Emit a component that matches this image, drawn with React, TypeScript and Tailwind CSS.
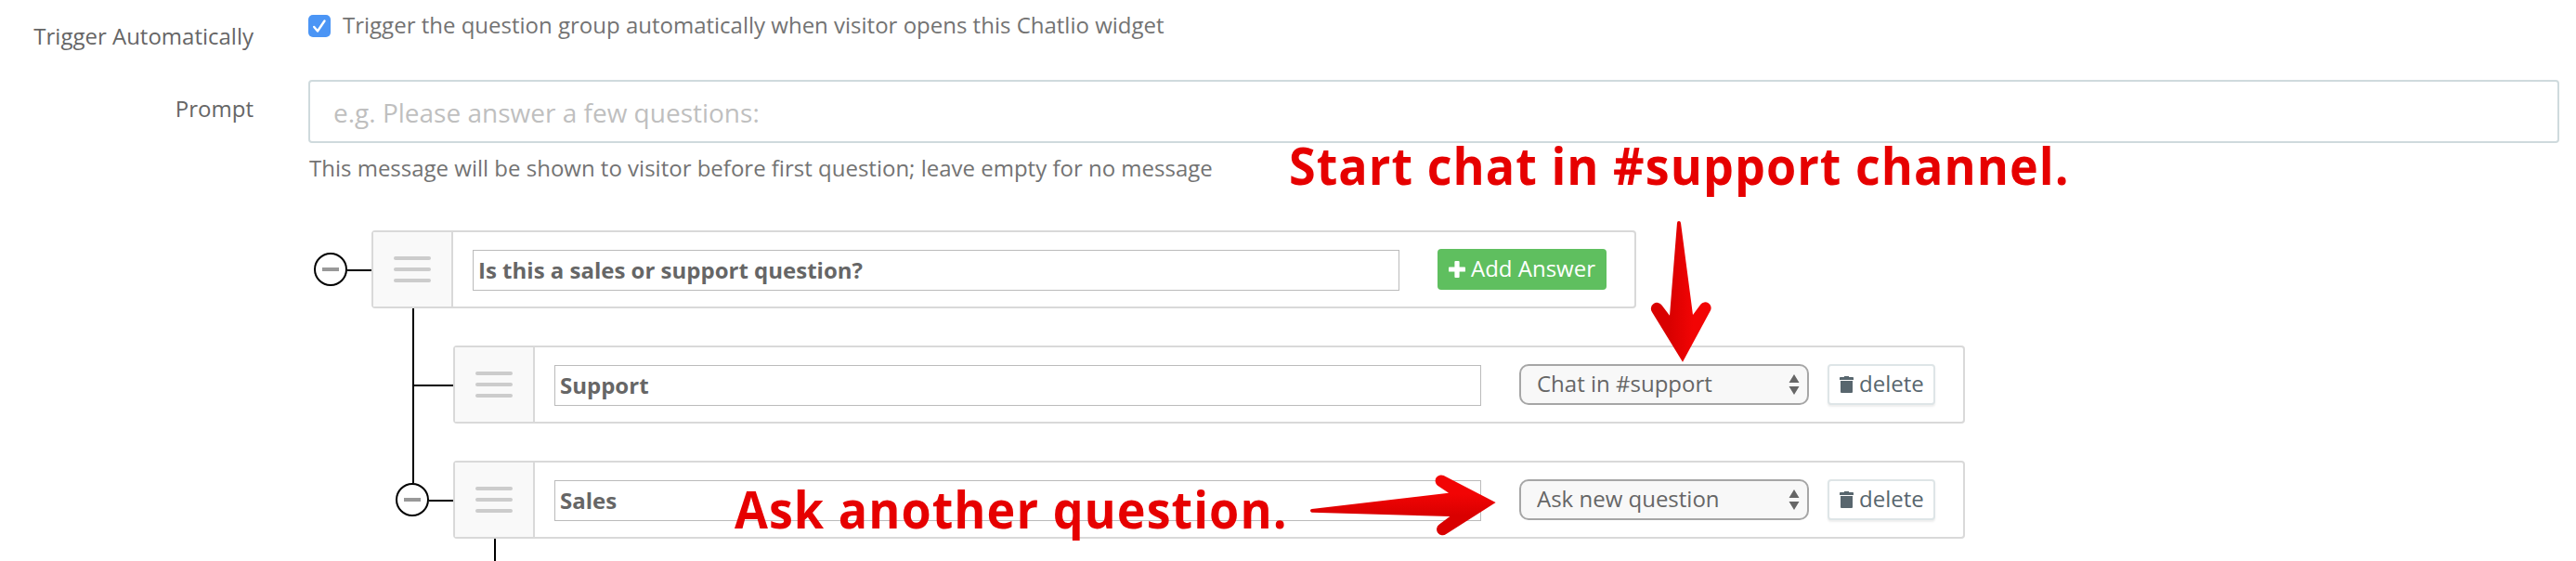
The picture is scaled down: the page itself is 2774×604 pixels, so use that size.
const selectOptions = ["Chat in #support", "Ask new question"]

function Toggle() {
  return (
    <div className="flex items-center">
      <button className="flex h-9 w-9 items-center justify-center rounded-full border-2 border-black bg-white">
        <span className="h-1 w-[18px] bg-[#999999]" />
      </button>
      <span className="mt-0.5 h-0.5 w-[26px] bg-black" />
    </div>
  )
}

function DragHandle() {
  return (
    <div className="flex w-[86px] shrink-0 flex-col items-center justify-center gap-2 border-r-2 border-[#d9d9d9] bg-[#f9f9f9]">
      <span className="h-1 w-10 rounded-full bg-[#cccccc]" />
      <span className="h-1 w-10 rounded-full bg-[#cccccc]" />
      <span className="h-1 w-10 rounded-full bg-[#cccccc]" />
    </div>
  )
}

function Card({ value, children }: { value: string; children: React.ReactNode }) {
  return (
    <div className="flex h-[84px] rounded-[4px] border-2 border-[#d9d9d9] bg-white">
      <DragHandle />
      <input
        className="mt-[19px] ml-[21px] h-[44px] w-[998px] border border-[#bbbbbb] px-[5px] pb-[2px] text-[24px] font-bold text-[#666666]"
        defaultValue={value}
      />
      {children}
    </div>
  )
}

function AnswerCard({ value, action }: { value: string; action: string }) {
  return (
    <Card value={value}>
      <div className="mt-[18px] mr-[30px] ml-[41px] flex gap-5">
        <div className="flex h-11 w-[312px] items-center justify-between rounded-[10px] border-2 border-[#a6a6a6] bg-[#f8f8f8] pr-2 pl-[17px]">
          <select
            className="h-9 w-[240px] appearance-none bg-transparent pb-[3px] text-[24px] leading-[34px] text-[#666666] outline-none"
            defaultValue={action}
          >
            {selectOptions.map((option) => (
              <option key={option}>{option}</option>
            ))}
          </select>
          <svg viewBox="0 0 12 22" className="h-[22px] w-3 fill-[#666666]">
            <path d="M6 0L11.5 9H0.5zM6 22L0.5 13H11.5z" />
          </svg>
        </div>
        <button className="flex h-11 w-[116px] items-center rounded-[4px] border-2 border-[#dee5e7] bg-white pl-[11px] text-[24px] leading-[34px] text-[#58666e] shadow-[0_2px_2px_rgba(90,90,90,0.1)]">
          <svg viewBox="0 0 15 18" className="mr-1.5 h-[18px] w-[15px] shrink-0 fill-[#58666e]">
            <path d="M5 0H10V1H14.2Q15 1 15 2V4H0V2Q0 1 .8 1H5zM1 5H14V17Q14 18 13 18H2Q1 18 1 17z" />
          </svg>
          <span className="pb-[3px]">delete</span>
        </button>
      </div>
    </Card>
  )
}

export default function App() {
  return (
    <div className="relative h-[604px] w-[2774px] overflow-hidden bg-white font-['Open_Sans',sans-serif] text-[24px] leading-[34px] text-[#666666]">
      {/* Trigger */}
      <div className="flex h-[86px]">
        <label className="w-[273px] pt-[22px] text-right">Trigger Automatically</label>
        <div className="ml-[59px] flex pt-[10px] text-[#737373]">
          <span className="mt-1.5 flex h-6 w-6 items-center justify-center rounded-[5px] bg-[#4b95f5]">
            <svg viewBox="0 0 24 24" className="h-6 w-6 fill-none stroke-white" strokeWidth={2.4} strokeLinecap="round" strokeLinejoin="round">
              <path d="M6.2 13L10 17.5L17.5 6.5" />
            </svg>
          </span>
          <span className="ml-[13px]">Trigger the question group automatically when visitor opens this Chatlio widget</span>
        </div>
      </div>

      {/* Prompt */}
      <div className="flex">
        <label className="w-[273px] pt-[14px] text-right">Prompt</label>
        <div className="ml-[59px] w-[2424px]">
          <input
            className="block h-[68px] w-full rounded-[4px] border-2 border-[#cfdadd] px-[25px] pt-[2px] text-[28px] placeholder:text-[#bfbfbf]"
            placeholder="e.g. Please answer a few questions:"
          />
          <p className="pt-[10px] pl-px text-[#737373]">
            This message will be shown to visitor before first question; leave empty for no message
          </p>
        </div>
      </div>

      {/* Question tree */}
      <div className="mt-[50px]">
        <div className="flex pl-[338px]">
          <div className="pt-6">
            <Toggle />
          </div>
          <Card value="Is this a sales or support question?">
            <button className="mt-[18px] mr-[30px] ml-[41px] flex h-11 w-[182px] items-center rounded-[4px] bg-[#5fbf5f] pl-3 text-white">
              <svg viewBox="0 0 18 18" className="mr-1.5 h-[18px] w-[18px] shrink-0 fill-white">
                <path d="M7.3 0H10.7Q11.6 0 11.6 .9V6.4H17.1Q18 6.4 18 7.3V10.7Q18 11.6 17.1 11.6H11.6V17.1Q11.6 18 10.7 18H7.3Q6.4 18 6.4 17.1V11.6H.9Q0 11.6 0 10.7V7.3Q0 6.4 .9 6.4H6.4V.9Q6.4 0 7.3 0z" />
              </svg>
              <span className="pb-[3px]">Add Answer</span>
            </button>
          </Card>
        </div>

        <div className="flex pl-[444px]">
          <div className="h-[124px] w-11 border-l-2 border-black pt-[82px]">
            <div className="h-0.5 bg-black" />
          </div>
          <div className="pt-10">
            <AnswerCard value="Support" action="Chat in #support" />
          </div>
        </div>

        <div className="flex pl-[426px]">
          <div>
            <div className="ml-[18px] h-16 w-0.5 bg-black" />
            <Toggle />
          </div>
          <div className="pt-10">
            <AnswerCard value="Sales" action="Ask new question" />
          </div>
        </div>
        <div className="ml-[532px] h-6 w-0.5 bg-black" />
      </div>

      {/* Annotations */}
      <div className="absolute top-[139px] left-[1388px] origin-left scale-x-93 text-[56px] leading-[76px] font-bold tracking-[1.1px] whitespace-nowrap text-[#e60000]">
        Start chat in #support channel.
      </div>
      <div className="absolute top-[509px] left-[791px] origin-left scale-x-93 text-[56px] leading-[76px] font-bold tracking-[1.1px] whitespace-nowrap text-[#e60000]">
        Ask another question.
      </div>
      <svg viewBox="0 0 420 540" className="absolute top-[220px] left-[1740px] h-[180px] w-[140px]">
        <defs>
          <linearGradient id="down" gradientUnits="userSpaceOnUse" x1="175" y1="0" x2="250" y2="0">
            <stop offset="0" stopColor="#d90000" />
            <stop offset="1" stopColor="#f20404" />
          </linearGradient>
        </defs>
        <path
          fill="url(#down)"
          d="M198 60Q198 54 204 54Q209 54 210 60L249 357L274 323A19 19 0 0 1 306 343L216 509L117 348A19 19 0 0 1 149 326L174 359Z"
        />
      </svg>
      <svg viewBox="0 0 780 372" className="absolute top-[480px] left-[1380px] h-[124px] w-[260px]">
        <defs>
          <linearGradient id="right" gradientUnits="userSpaceOnUse" x1="0" y1="155" x2="0" y2="225">
            <stop offset="0" stopColor="#f20404" />
            <stop offset="1" stopColor="#d90000" />
          </linearGradient>
        </defs>
        <path
          fill="url(#right)"
          d="M98 204L540 152L504 128A19 19 0 0 1 524 96L692 183L532 285A19 19 0 0 1 509 254L544 228L98 215Q93 214 93 209Q93 205 98 204Z"
        />
      </svg>
    </div>
  )
}
